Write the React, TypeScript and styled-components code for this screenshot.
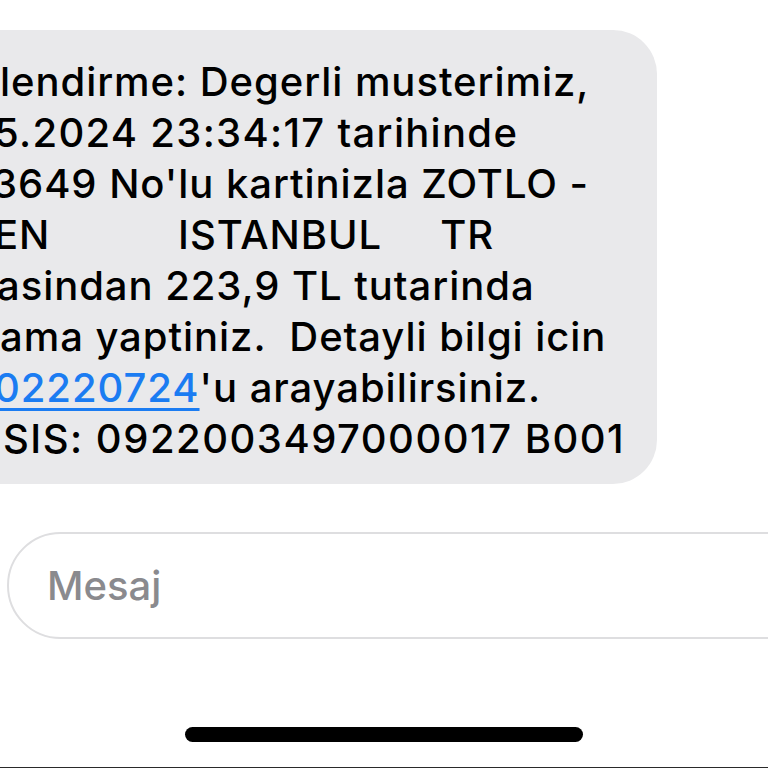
import styled, { createGlobalStyle } from "styled-components";

const GlobalStyle = createGlobalStyle`
    html, body {
        margin: 0;
        padding: 0;
        background: #ffffff;
    }
    body {
        font-family: Inter, "Liberation Sans", sans-serif;
        -webkit-font-smoothing: antialiased;
    }
`

const Screen = styled.div`
    width: 768px;
    height: 768px;
    overflow: hidden;
    display: flex;
    flex-direction: column;
    background: #ffffff;
`

const Bubble = styled.div`
    box-sizing: border-box;
    width: 701px;
    margin-top: 30px;
    margin-left: -44px;
    padding: 26px 0 20px 44px;
    background: #e9e9eb;
    border-radius: 44px;
    color: #000000;
    font-size: 40px;
    line-height: 51px;
    font-weight: 500;
    letter-spacing: 0.95px;
`

const Line = styled.div<{ $shift?: number; $spacing?: number }>`
    white-space: pre;
    margin-left: ${(p) => p.$shift ?? 0}px;
    ${(p) => (p.$spacing !== undefined ? `letter-spacing: ${p.$spacing}px;` : "")}
`

const Link = styled.a`
    color: #1b7cf2;
    text-decoration: underline;
    text-decoration-thickness: 3px;
    text-underline-offset: 6px;
`

const Composer = styled.div`
    box-sizing: border-box;
    height: 107px;
    margin-top: 48px;
    margin-left: 7px;
    margin-right: -80px;
    padding-left: 38px;
    display: flex;
    align-items: center;
    border: 2px solid #dedee0;
    border-radius: 54px;
    font-size: 40px;
    font-weight: 500;
    color: #8a8a8e;
`

const HomeBar = styled.div`
    align-self: center;
    width: 398px;
    height: 15px;
    margin-top: 88px;
    border-radius: 8px;
    background: #000000;
`

const BottomEdge = styled.div`
    margin-top: auto;
    height: 1px;
    background: #2a2a2a;
`

export default function App() {
    return (
        <Screen>
            <GlobalStyle />
            <Bubble>
                <Line>lendirme: Degerli musterimiz,</Line>
                <Line $shift={-6} $spacing={1.3}>5.2024 23:34:17 tarihinde</Line>
                <Line $shift={-8}>3649 No'lu kartinizla ZOTLO -</Line>
                <Line $shift={-6}>{"EN           ISTANBUL     TR"}</Line>
                <Line $shift={-3}>asindan 223,9 TL tutarinda</Line>
                <Line>{"ama yaptiniz.  Detayli bilgi icin"}</Line>
                <Line $shift={-6}>
                    <Link>02220724</Link>'u arayabilirsiniz.
                </Line>
                <Line $shift={3} $spacing={1.5}>SIS: 0922003497000017 B001</Line>
            </Bubble>
            <Composer>Mesaj</Composer>
            <HomeBar />
            <BottomEdge />
        </Screen>
    )
}
